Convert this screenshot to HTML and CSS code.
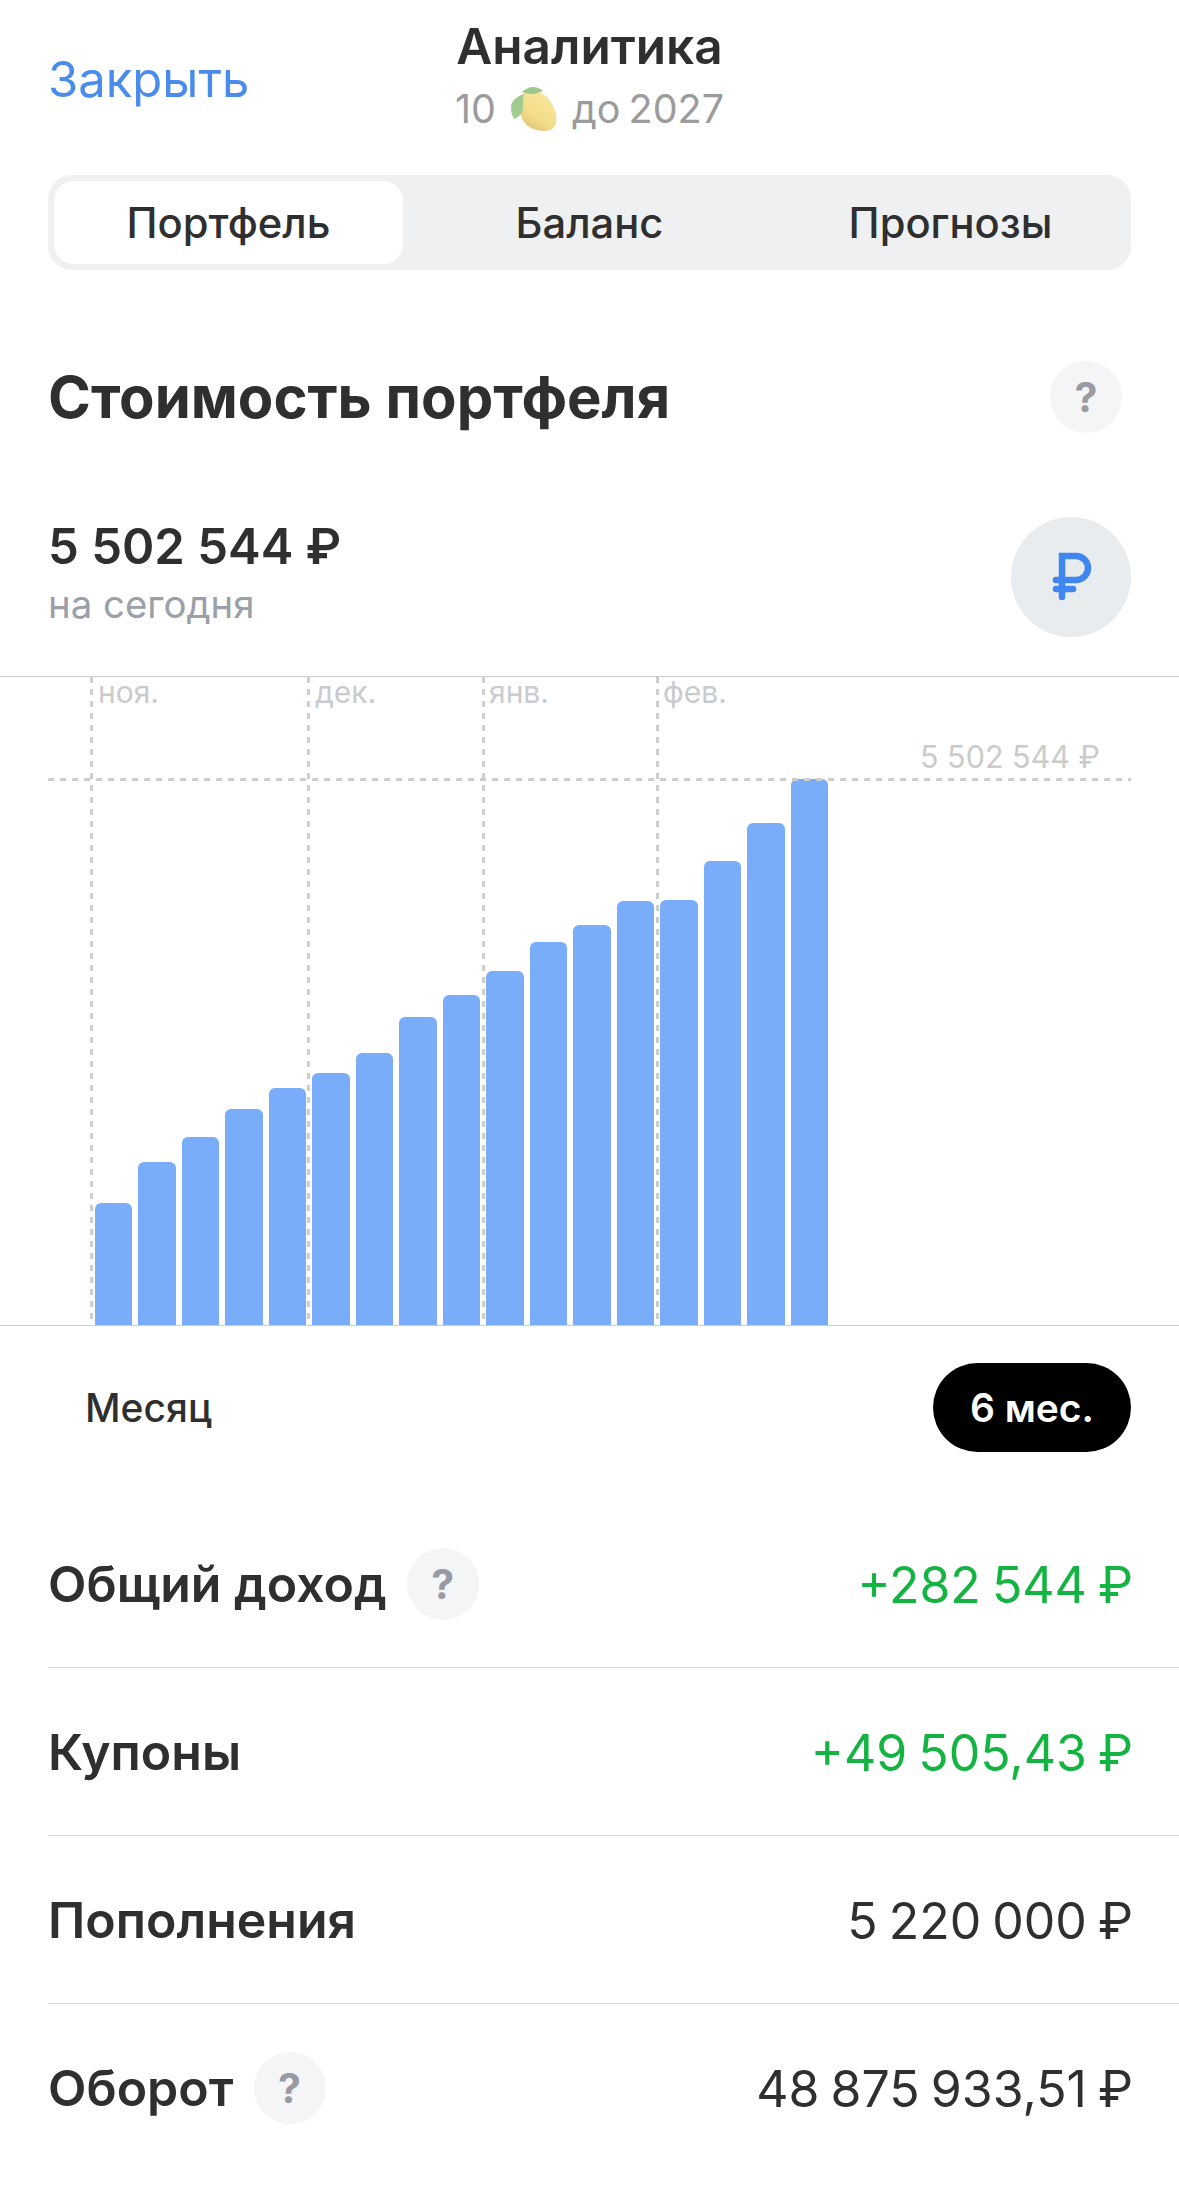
FILE: index.html
```html
<!DOCTYPE html>
<html lang="ru">
<head>
    <meta charset="UTF-8">
    <meta name="viewport" content="width=device-width, initial-scale=1.0">
    <title>Аналитика</title>
    <link rel="stylesheet" href="styles.css">
</head>
<body>
    <header class="top">
        <a class="close">Закрыть</a>
        <div class="title">
            <h1>Аналитика</h1>
            <p>10
                <svg class="lemon" viewBox="0 0 46 44">
                    <defs>
                        <linearGradient id="lemonBody" x1="0.800" y1="0.100" x2="0.300" y2="1">
                            <stop offset="0" stop-color="#f8e89a"/>
                            <stop offset="0.650" stop-color="#f2dc8a"/>
                            <stop offset="1" stop-color="#e2c47a"/>
                        </linearGradient>
                    </defs>
                    <path d="M17 4C28 2 38 9 42 19c3 6 4 11 3 17-1 5-6 8-12 8C23 44 13 39 10 29 7 18 9 6 17 4z" fill="url(#lemonBody)"/>
                    <path d="M13 7C6 9 0 14 0 20c0 5 1 9 3 12 5-2 9-6 9-11 0-5 0-10 1-14z" fill="#a3cb90"/>
                    <path d="M11 5c3-3 7-5 11-5 4 0 8 2 10 4-5 2-8 3-12 3-3 0-6-1-9-2z" fill="#9fc88c"/>
                </svg>
                до 2027</p>
        </div>
    </header>

    <nav class="tabs">
        <span class="tab active">Портфель</span>
        <span class="tab">Баланс</span>
        <span class="tab">Прогнозы</span>
    </nav>

    <section class="heading">
        <h2>Стоимость портфеля</h2>
        <span class="help">?</span>
    </section>

    <section class="today">
        <div class="today-text">
            <div class="today-value">5 502 544 ₽</div>
            <div class="today-label">на сегодня</div>
        </div>
        <span class="currency">
            <svg viewBox="0 0 42 54" width="42" height="54">
                <path d="M12 47V6H26a12 12 0 0 1 0 24H6M6 39H23" fill="none" stroke="#3f86f0" stroke-width="6.500" stroke-linecap="round"/>
            </svg>
        </span>
    </section>

    <section class="chart">
        <i class="grid-line" style="left: 90px"></i>
        <i class="grid-line" style="left: 307px"></i>
        <i class="grid-line" style="left: 482px"></i>
        <i class="grid-line" style="left: 656px"></i>
        <span class="month" style="left: 98px">ноя.</span>
        <span class="month" style="left: 315px">дек.</span>
        <span class="month" style="left: 489px">янв.</span>
        <span class="month" style="left: 663px">фев.</span>
        <span class="max-label">5 502 544 ₽</span>
        <div class="bars">
            <span class="bar" style="height: 122px"></span>
            <span class="bar" style="height: 163px"></span>
            <span class="bar" style="height: 188px"></span>
            <span class="bar" style="height: 216px"></span>
            <span class="bar" style="height: 237px"></span>
            <span class="bar" style="height: 252px"></span>
            <span class="bar" style="height: 272px"></span>
            <span class="bar" style="height: 308px"></span>
            <span class="bar" style="height: 330px"></span>
            <span class="bar" style="height: 354px"></span>
            <span class="bar" style="height: 383px"></span>
            <span class="bar" style="height: 400px"></span>
            <span class="bar" style="height: 424px"></span>
            <span class="bar" style="height: 425px"></span>
            <span class="bar" style="height: 464px"></span>
            <span class="bar" style="height: 502px"></span>
            <span class="bar" style="height: 546px"></span>
        </div>
        <i class="max-line"></i>
    </section>

    <section class="period">
        <span class="period-item">Месяц</span>
        <span class="period-item active">6 мес.</span>
    </section>

    <section class="stats">
        <div class="row">
            <div class="row-name">Общий доход <span class="help">?</span></div>
            <div class="row-value green">+282 544 ₽</div>
        </div>
        <div class="row">
            <div class="row-name">Купоны</div>
            <div class="row-value green">+49 505,43 ₽</div>
        </div>
        <div class="row">
            <div class="row-name">Пополнения</div>
            <div class="row-value">5 220 000 ₽</div>
        </div>
        <div class="row">
            <div class="row-name">Оборот <span class="help">?</span></div>
            <div class="row-value">48 875 933,51 ₽</div>
        </div>
    </section>
</body>
</html>
```

FILE: styles.css
```css
* { box-sizing: border-box; }
html, body { margin: 0; padding: 0; }
body { width: 1179px; height: 2189px; overflow: hidden; background: #fff; color: #2f2f2f; font-family: Inter, "Noto Sans", sans-serif; }
h1, h2, p { margin: 0; font-size: inherit; }

.top { height: 175px; padding: 12px 48px 0; display: grid; grid-template-columns: 1fr auto 1fr; align-items: start; }
.close { margin-top: 31px; color: #4a8cec; font-size: 49px; line-height: 74px; }
.title { text-align: center; }
.title h1 { font-size: 49.500px; line-height: 68px; font-weight: 600; }
.title p { color: #9b9b9b; font-size: 39.500px; line-height: 58px; word-spacing: -3px; display: flex; align-items: center; justify-content: center; gap: 15px; }
.lemon { width: 46px; height: 44px; }

.tabs { margin: 0 48px; height: 95px; padding: 6px; display: grid; grid-template-columns: repeat(3, 1fr); gap: 12px; background: #eef0f2; border-radius: 24px; }
.tab { display: flex; align-items: center; justify-content: center; font-size: 41.700px; font-weight: 500; border-radius: 20px; }
.tab.active { background: #fff; }

.help { display: inline-flex; width: 72px; height: 72px; align-items: center; justify-content: center; border-radius: 50%; background: #f4f5f7; color: #989ba4; font-size: 41px; font-weight: 700; }

.heading { margin-top: 91px; height: 72px; padding: 0 57px 0 48px; display: flex; align-items: center; justify-content: space-between; }
.heading h2 { font-size: 58px; font-weight: 700; }

.today { margin-top: 84px; height: 120px; padding: 0 48px; display: flex; align-items: center; justify-content: space-between; }
.today-text { padding-bottom: 6px; }
.today-value { font-size: 49px; line-height: 58px; font-weight: 600; }
.today-label { margin-top: 2px; color: #9a9fa8; font-size: 38.400px; line-height: 52px; }
.currency { width: 120px; height: 120px; display: flex; align-items: center; justify-content: center; border-radius: 50%; background: #e9ecee; }

.chart { position: relative; margin-top: 39px; height: 650px; border-top: 1px solid #cfcfd1; border-bottom: 1px solid #cfcfd1; }
.grid-line { position: absolute; top: 0; bottom: 0; width: 3px; background: repeating-linear-gradient(#cecece 0 6px, transparent 6px 12px); }
.month { position: absolute; top: -3px; color: #c9cbce; font-size: 30px; line-height: 36px; }
.max-line { position: absolute; left: 48px; right: 48px; top: 101px; height: 3px; background: repeating-linear-gradient(90deg, #cecece 0 6px, transparent 6px 12px); }
.max-label { position: absolute; right: 79px; top: 61px; color: #cbcbcb; font-size: 30.500px; line-height: 38px; }
.bars { position: absolute; left: 94.500px; bottom: 0; display: flex; align-items: flex-end; gap: 6px; }
.bar { width: 37.500px; background: #7aadf9; border-radius: 6px 6px 0 0; }

.period { margin: 37px 48px 0; height: 89px; display: flex; justify-content: space-between; align-items: center; }
.period-item { height: 89px; padding: 0 37px; display: flex; align-items: center; font-size: 39px; font-weight: 500; border-radius: 45px; }
.period-item.active { background: #000; color: #fff; font-weight: 600; }

.stats { margin: 48px 0 0 48px; }
.row { height: 168px; padding-right: 46px; display: flex; align-items: center; justify-content: space-between; border-bottom: 1px solid #d8d8da; }
.row:last-child { border-bottom: 0; }
.row-name { display: flex; align-items: center; gap: 20px; font-size: 50px; font-weight: 560; }
.row-value { padding-top: 2px; font-size: 50px; word-spacing: -3px; }
.green { color: #13b441; }
```
